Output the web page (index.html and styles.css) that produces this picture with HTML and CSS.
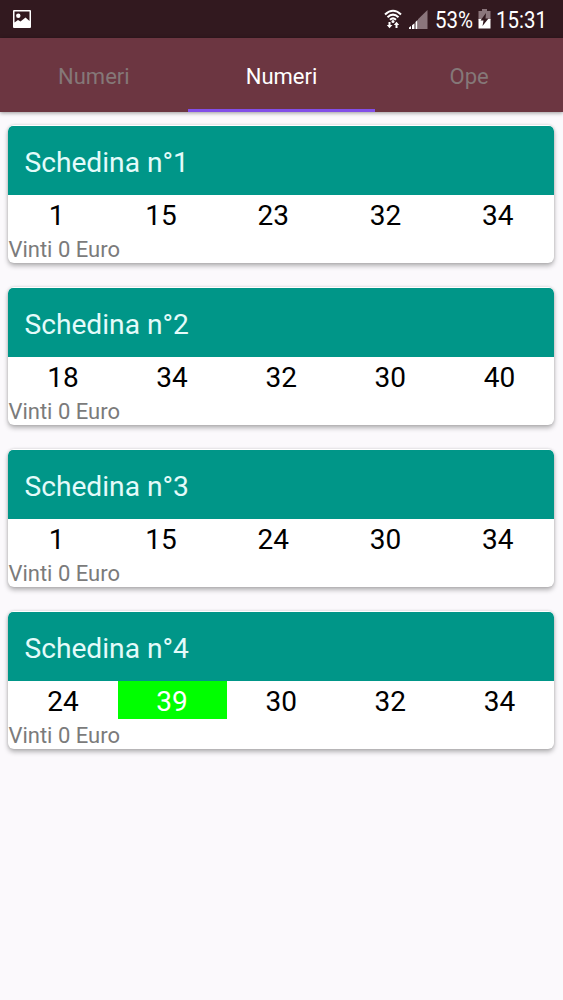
FILE: index.html
```html
<!DOCTYPE html>
<html lang="it">
<head>
    <meta charset="UTF-8">
    <meta name="viewport" content="width=device-width, initial-scale=1.0">
    <title>Schedine</title>
    <link rel="stylesheet" href="styles.css">
</head>
<body>
    <div class="status-bar">
        <svg class="icon-picture" width="20" height="20" viewBox="0 0 20 20">
            <path fill="#fff" fill-rule="evenodd" d="M2 1h16q1 0 1 1v16q0 1-1 1H2q-1 0-1-1V2q0-1 1-1zM2.500 2.500v11l3.500-2.500 2.500 1.500 5-4 4 3.500V2.500z"/>
            <circle cx="6.300" cy="6.800" r="2.200" fill="#fff"/>
        </svg>
        <svg class="icon-wifi" width="18" height="20" viewBox="0 0 18 20">
            <g fill="none" stroke="#fff" stroke-width="2">
                <path d="M1 5.500Q9-2 17 5.500"/>
                <path d="M3.500 8.300Q9 3 14.500 8.300"/>
                <path d="M6 10.800Q9 8 12 10.800"/>
            </g>
            <circle cx="9" cy="12.500" r="1.500" fill="#fff"/>
            <path fill="#fff" d="M4.500 13h2v3h2L5.500 19.300 2.800 16h1.700zM11.500 19v-3H9.800l2.700-3.300 2.700 3.300h-1.700v3z"/>
        </svg>
        <svg class="icon-signal" width="20" height="19" viewBox="0 0 20 19">
            <path fill="#8b767c" d="M19.500 0v19H10V9.200z"/>
            <path fill="#fff" d="M1 19v-1.500l2-1.500V19zM4 19v-3.800l2.500-2V19zM7.500 19v-7l2-2v9z"/>
        </svg>
        <span class="battery-level">53%</span>
        <svg class="icon-battery" width="13" height="20" viewBox="0 0 13 20">
            <path fill="#8b767c" d="M4 0h5v2h3.500v9H.5V2H4z"/>
            <path fill="#fff" d="M.5 10h12v9.500H.5z"/>
            <path fill="#32191f" d="M8 4 2.500 11.500H5.500L4.500 17l6-7.500H7.500z"/>
        </svg>
        <span class="clock">15:31</span>
    </div>

    <div class="tabs">
        <div class="tab">Numeri</div>
        <div class="tab active">Numeri</div>
        <div class="tab">Ope</div>
    </div>

    <div class="list">
        <div class="card">
            <div class="card-title">Schedina n°1</div>
            <div class="numbers">
                <span>1</span>
                <span>15</span>
                <span>23</span>
                <span>32</span>
                <span>34</span>
            </div>
            <div class="prize">Vinti 0 Euro</div>
        </div>

        <div class="card">
            <div class="card-title">Schedina n°2</div>
            <div class="numbers">
                <span>18</span>
                <span>34</span>
                <span>32</span>
                <span>30</span>
                <span>40</span>
            </div>
            <div class="prize">Vinti 0 Euro</div>
        </div>

        <div class="card">
            <div class="card-title">Schedina n°3</div>
            <div class="numbers">
                <span>1</span>
                <span>15</span>
                <span>24</span>
                <span>30</span>
                <span>34</span>
            </div>
            <div class="prize">Vinti 0 Euro</div>
        </div>

        <div class="card">
            <div class="card-title">Schedina n°4</div>
            <div class="numbers">
                <span>24</span>
                <span class="hit">39</span>
                <span>30</span>
                <span>32</span>
                <span>34</span>
            </div>
            <div class="prize">Vinti 0 Euro</div>
        </div>
    </div>
</body>
</html>
```

FILE: styles.css
```css
* {
    box-sizing: border-box;
}

body {
    margin: 0;
    min-height: 100vh;
    background: #fbf9fc;
    font-family: Roboto, sans-serif;
}

.status-bar {
    display: flex;
    align-items: center;
    height: 38px;
    padding: 0 15px 0 12px;
    background: #32191f;
    color: #fff;
    font-size: 23px;
}

.icon-picture {
    margin-right: auto;
}

.icon-signal {
    margin: 0 7px 0 6px;
}

.battery-level,
.clock {
    padding-top: 3px;
    line-height: 38px;
    white-space: nowrap;
    transform-origin: left center;
    transform: scaleX(0.89);
}

.battery-level {
    width: 38px;
}

.icon-battery {
    margin: 0 5px;
}

.clock {
    width: 52px;
}

.tabs {
    position: relative;
    display: flex;
    height: 74px;
    background: #6c3641;
    box-shadow: 0 1px 4px rgba(0, 0, 0, 0.4);
}

.tab {
    flex: 1;
    padding-top: 2px;
    border-bottom: 3px solid transparent;
    color: #857878;
    font-size: 22px;
    line-height: 74px;
    text-align: center;
}

.tab.active {
    border-color: #824fe8;
    color: #fff;
}

.list {
    display: flex;
    flex-direction: column;
    gap: 24px;
    padding: 13px 9px 13px 8.4px;
}

.card {
    height: 138px;
    padding-top: 1px;
    overflow: hidden;
    background: #fff;
    border-radius: 6px;
    box-shadow: 0 3px 5px rgba(0, 0, 0, 0.28), 0 0 3px rgba(0, 0, 0, 0.15);
}

.card-title {
    height: 69px;
    padding-left: 16px;
    background: #009688;
    border-radius: 5px 5px 0 0;
    color: #e4fbfa;
    font-size: 28.2px;
    line-height: 73px;
}

.numbers {
    display: flex;
    height: 38px;
    color: #000;
    font-size: 28px;
    line-height: 42px;
}

.numbers span {
    flex: 1 1 auto;
    text-align: center;
}

.numbers .hit {
    background: #00ff00;
    color: #fff;
}

.prize {
    color: #7b7b7b;
    font-size: 22px;
    line-height: 33px;
}
```
